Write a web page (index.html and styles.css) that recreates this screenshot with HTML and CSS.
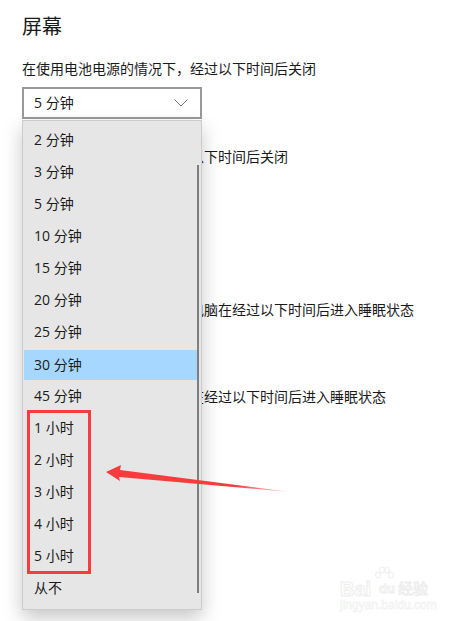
FILE: index.html
```html
<!DOCTYPE html>
<html lang="zh-CN">
<head>
  <meta charset="UTF-8" />
  <title>屏幕</title>
  <link rel="stylesheet" href="styles.css">
</head>
<body>

  <!-- Settings page -->
  <div class="page">
    <h2 class="heading">屏幕</h2>
    <p class="label">在使用电池电源的情况下，经过以下时间后关闭</p>
    <div class="select">
      <span>5 分钟</span>
      <svg class="chevron" width="14" height="8" viewBox="0 0 14 8"><path d="M0.5 0.5 L7 7 L13.5 0.5" fill="none" stroke="#777" stroke-width="1"/></svg>
    </div>

    <!-- these selects sit under the open dropdown -->
    <p class="label label-next">在接通电源的情况下，经过以下时间后关闭</p>
    <div class="select"></div>

    <p class="label label-section">在使用电池电源的情况下，电脑在经过以下时间后进入睡眠状态</p>
    <div class="select"></div>

    <p class="label label-last">在接通电源的情况下，电脑在经过以下时间后进入睡眠状态</p>
    <div class="select"></div>
  </div>

  <!-- Open dropdown -->
  <div class="dropdown">
    <div class="option">2 分钟</div>
    <div class="option">3 分钟</div>
    <div class="option">5 分钟</div>
    <div class="option">10 分钟</div>
    <div class="option">15 分钟</div>
    <div class="option">20 分钟</div>
    <div class="option">25 分钟</div>
    <div class="option selected">30 分钟</div>
    <div class="option">45 分钟</div>
    <div class="option">1 小时</div>
    <div class="option">2 小时</div>
    <div class="option">3 小时</div>
    <div class="option">4 小时</div>
    <div class="option">5 小时</div>
    <div class="option">从不</div>
    <div class="scrollbar"></div>
  </div>

  <!-- Annotations -->
  <div class="mark-box"></div>
  <svg class="mark-arrow" width="190" height="32" viewBox="0 0 190 32">
    <defs>
      <linearGradient id="fade" x1="0" y1="0" x2="1" y2="0">
        <stop offset="0.7" stop-color="#f63c3c"/>
        <stop offset="1" stop-color="#f63c3c" stop-opacity="0.2"/>
      </linearGradient>
    </defs>
    <path d="M1 10 L16 3 L15 8 L185 30 L14 15 L15 19 Z" fill="url(#fade)"/>
  </svg>

  <!-- Watermark -->
  <div class="watermark">
    <svg class="paw" width="20" height="18" viewBox="0 0 20 18">
      <g fill="#fff" stroke="#eee" stroke-width="1">
        <ellipse cx="4" cy="9" rx="2.5" ry="3"/>
        <ellipse cx="8" cy="4" rx="2.5" ry="3"/>
        <ellipse cx="13" cy="4" rx="2.5" ry="3"/>
        <ellipse cx="17" cy="9" rx="2.5" ry="3"/>
      </g>
    </svg>
    <div class="wm-logo"><span class="wm-bai">Bai</span><span class="wm-du">du</span><span class="wm-jy">经验</span></div>
    <div class="wm-url">jingyan.baidu.com</div>
  </div>

</body>
</html>
```

FILE: styles.css
```css
* {
  box-sizing: border-box;
}

body {
  margin: 0;
  height: 621px;
  overflow: hidden;
  position: relative;
  background-color: #fff;
  color: #1a1a1a;
  font-family: 'Open Sans', 'Noto Sans CJK SC', sans-serif;
  font-size: 14px;
}

/* PAGE */
.page {
  padding: 13px 0 0 22px;
}

.heading {
  margin: 0;
  font-size: 20px;
  font-weight: 400;
  line-height: 28px;
}

.label {
  margin: 18px 0 8px;
  line-height: 20px;
  white-space: nowrap;
}

.label-next {
  margin-top: 28px;
}

.label-section {
  margin-top: 93px;
}

.label-last {
  margin-top: 27px;
}

.select {
  width: 180px;
  height: 32px;
  padding: 0 10px;
  border: 2px solid #999;
  display: flex;
  align-items: center;
  justify-content: space-between;
  line-height: 20px;
}

.chevron {
  margin-right: 2px;
}

/* DROPDOWN */
.dropdown {
  position: absolute;
  left: 22px;
  top: 120px;
  width: 180px;
  height: 490px;
  padding-top: 3px;
  background-color: #e6e6e6;
  border: 1px solid #ccc;
  box-shadow: 0 8px 18px rgba(0, 0, 0, 0.22);
}

.option {
  height: 32px;
  padding-left: 11px;
  line-height: 32px;
}

.selected {
  height: 30px;
  margin: 2px 3px 0 1px;
  padding-left: 10px;
  line-height: 29px;
  background-color: #a6d8ff;
}

.scrollbar {
  position: absolute;
  right: 2px;
  top: 44px;
  width: 2px;
  height: 428px;
  background-color: #7f7f7f;
}

/* ANNOTATIONS */
.mark-box {
  position: absolute;
  left: 27px;
  top: 410px;
  width: 64px;
  height: 164px;
  border: 3px solid #f63c3c;
}

.mark-arrow {
  position: absolute;
  left: 105px;
  top: 462px;
}

/* WATERMARK */
.watermark {
  position: absolute;
  left: 340px;
  top: 566px;
  width: 100px;
  height: 46px;
  color: #fff;
  -webkit-text-stroke: 1px #eee;
  font-family: 'Liberation Sans', 'Noto Sans CJK SC', sans-serif;
}

.paw {
  position: absolute;
  left: 34px;
  top: 0;
}

.wm-logo {
  position: absolute;
  top: 11px;
  left: 0;
  display: flex;
  align-items: center;
  white-space: nowrap;
  line-height: 22px;
}

.wm-bai {
  font-size: 20px;
  font-weight: 700;
  width: 36px;
}

.wm-du {
  width: 22px;
  padding-top: 1px;
  font-size: 13px;
  font-weight: 700;
  text-align: center;
}

.wm-jy {
  font-size: 15px;
}

.wm-url {
  position: absolute;
  top: 32px;
  left: 0;
  font-size: 12px;
  line-height: 14px;
  white-space: nowrap;
  -webkit-text-stroke: 0.5px #eee;
}
```
